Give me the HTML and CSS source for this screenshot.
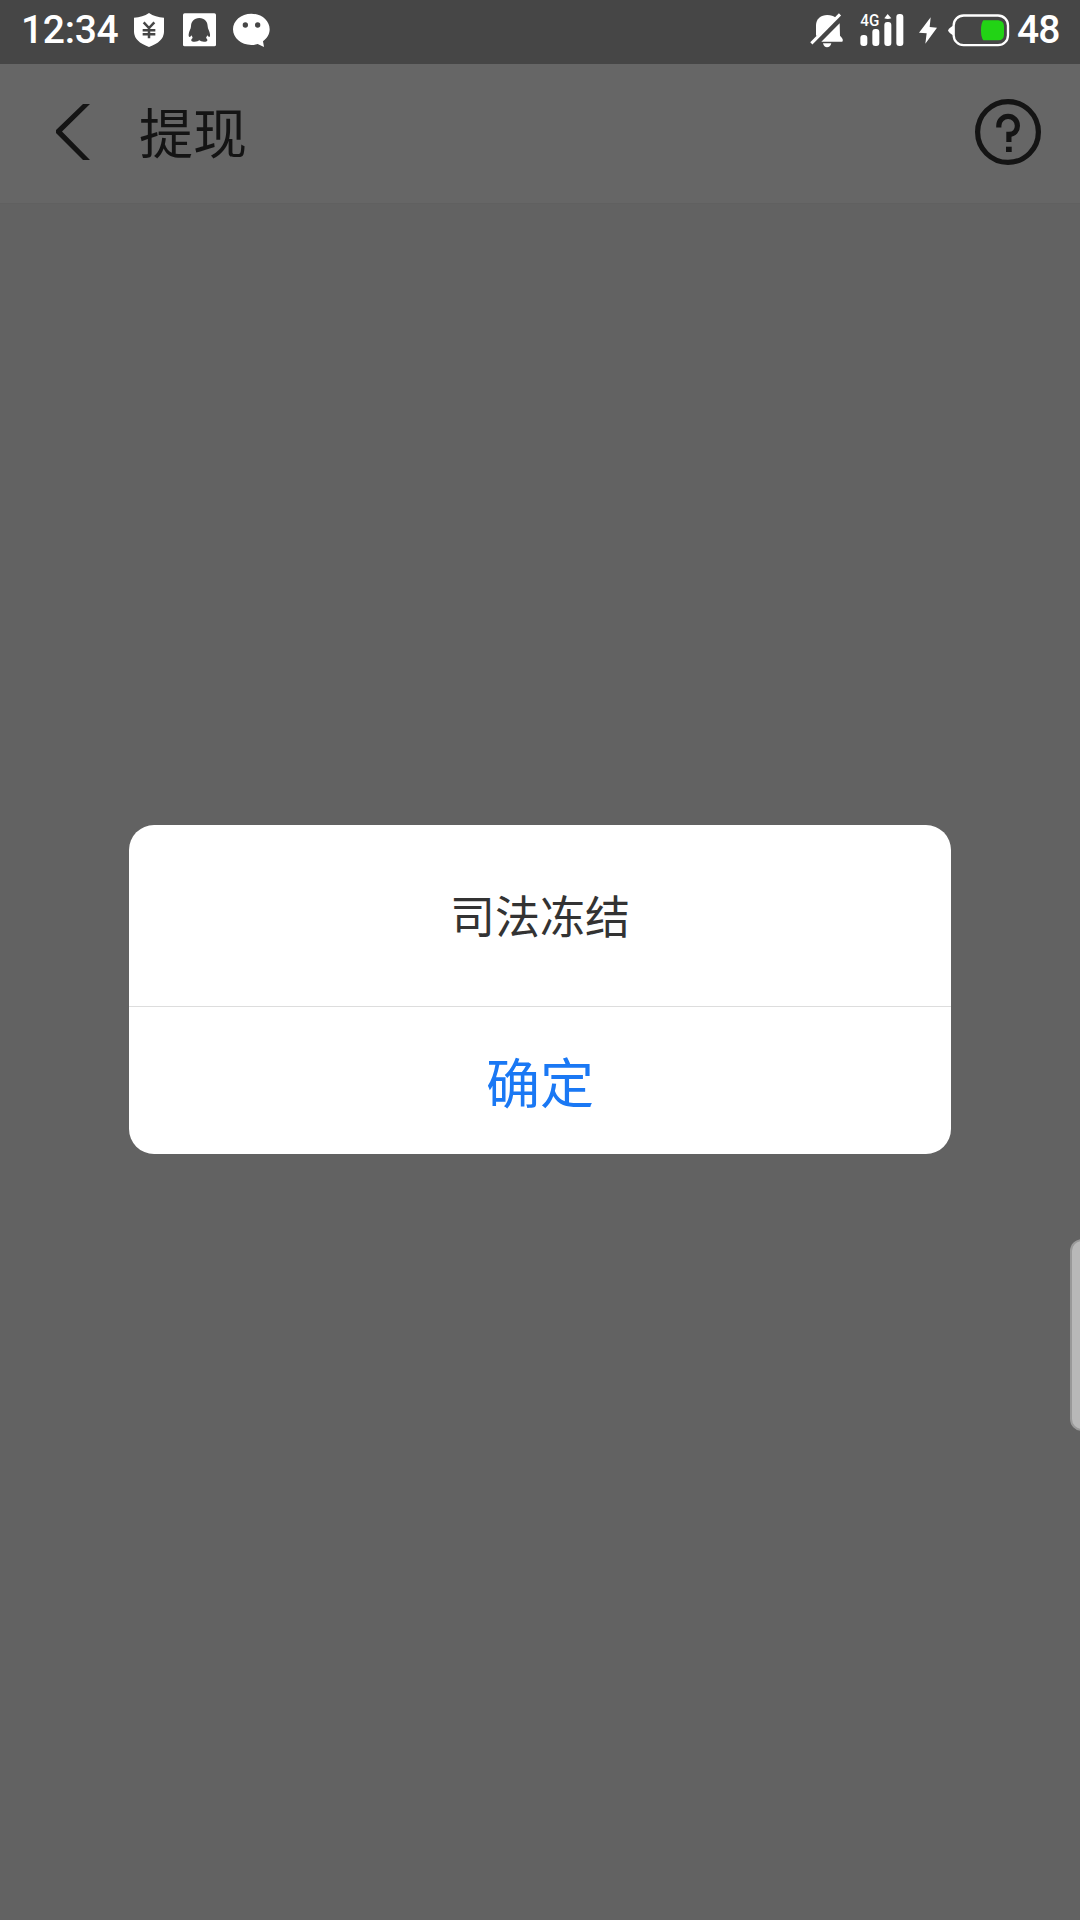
FILE: index.html
```html
<!DOCTYPE html>
<html lang="zh-CN">
<head>
<meta charset="utf-8">
<title>提现</title>
<link rel="stylesheet" href="styles.css">
</head>
<body>
<div class="screen">
  <div class="status">
    <div class="status-group">
      <span class="time">12:34</span>
      <svg class="icon-shield" width="30" height="34" viewBox="402 39 90 102"><path fill="#fff" d="M447 39Q466 52 492 53V96Q491 125 447 141Q403 125 402 96V53Q428 52 447 39Z"/><path fill="none" stroke="#464646" stroke-width="7.500" d="M431 67L447 84L463 67M447 82V115M428 91H466M428 103H466"/></svg>
      <svg class="icon-qq" width="33" height="34" viewBox="549 39 99 102"><rect x="549" y="40" width="99" height="99" rx="5" fill="#fff"/><path fill="#464646" d="M598 54C582 54 573 65 573 79C573 87 567 93 566 103C565 113 570 113 575 106L578 114C572 118 572 125 580 125Q593 126 598 121Q603 126 616 125C624 125 624 118 618 114L622 106C627 113 631 113 630 103C629 93 623 87 623 79C623 65 614 54 598 54Z"/></svg>
      <svg class="icon-chat" width="37" height="35" viewBox="699 39 111 105"><path fill="#fff" d="M754 41C785 41 809 62 809 88C809 103 801 115 789 124L792 141L773 132Q763 135 754 135C723 135 699 114 699 88C699 62 723 41 754 41Z"/><circle cx="736" cy="75" r="8" fill="#464646"/><circle cx="773" cy="75" r="8" fill="#464646"/></svg>
    </div>
    <div class="status-group">
      <svg width="34" height="35" viewBox="60 38 102 105"><g fill="#fff"><path d="M78 105V75C78 55 93 44 112 44Q128 44 137 52L81 108Z"/><path d="M149 69L94 124H157Q161 119 156 113L150 106Z"/><path d="M99 129H124Q121 141 111 141Q102 141 99 129Z"/></g><path d="M64 129L150 42" stroke="#fff" stroke-width="9"/></svg>
      <svg class="icon-signal" width="44" height="34" viewBox="212 39 132 102"><g fill="#fff"><rect x="213" y="105" width="21" height="33" rx="9"/><rect x="249" y="87" width="21" height="51" rx="9"/><rect x="285" y="66" width="21" height="72" rx="9"/><rect x="321" y="42" width="21" height="96" rx="9"/><path d="M295 42L306 55Q295 59 285 55Z"/><text class="network" x="213" y="78" textLength="57" lengthAdjust="spacingAndGlyphs">4G</text></g></svg>
      <svg class="icon-bolt" width="18" height="27" viewBox="387 50 54 81"><path fill="#fff" d="M422 51L387 97L410 99L406 130L441 82L419 80Z"/></svg>
      <svg class="icon-battery" width="62" height="33" viewBox="477 41 186 99"><rect x="494" y="45.500" width="163" height="89" rx="30" fill="none" stroke="#fff" stroke-width="7"/><path fill="#fff" d="M492 76Q479 84 477 90Q479 97 492 105Z"/><path fill="#22d315" d="M583 60H628Q645 62 645 78V103Q645 119 628 120H583Q576 112 576 90Q576 68 583 60Z"/></svg>
      <span class="level">48</span>
    </div>
  </div>
  <header class="header">
    <svg class="back" width="34" height="58" viewBox="0 0 34 58"><path fill="#141414" d="M27 1H34L6 28.500L34 57H27L0 30V27Z"/></svg>
    <h1 class="title">提现</h1>
    <svg class="help" width="66" height="66" viewBox="0 0 66 66"><circle cx="33" cy="33" r="30.400" fill="none" stroke="#141414" stroke-width="5.200"/><path fill="none" stroke="#141414" stroke-width="5.200" d="M23.800 28.500V26.700A9.300 9.300 0 0 1 33.100 17.400A9.300 9.300 0 0 1 42.400 26.700C42.400 31.500 39.500 35.400 33.900 35.400V43"/><path fill="#141414" d="M31 47.700H36.700V53H31Z"/></svg>
  </header>
  <main class="content">
    <div class="dialog">
      <p class="message">司法冻结</p>
      <button class="confirm">确定</button>
    </div>
  </main>
  <div class="edge-handle"></div>
</div>
</body>
</html>
```
FILE: styles.css
```css
* { box-sizing: border-box; }
body {
  margin: 0;
  font-family: "Noto Sans CJK SC", sans-serif;
}
.screen {
  position: relative;
  width: 1080px;
  height: 1920px;
  display: flex;
  flex-direction: column;
  overflow: hidden;
  background: #626262;
}
svg { display: block; flex: none; overflow: visible; }
.status {
  height: 64px;
  padding: 0 20px 4px 21px;
  display: flex;
  align-items: center;
  justify-content: space-between;
  background: #464646;
  color: #fff;
}
.status-group { display: flex; align-items: center; }
.time, .level {
  font: 500 39px/60px Roboto, sans-serif;
}
.time { width: 113px; letter-spacing: -0.3px; }
.icon-qq { margin-left: 19px; }
.icon-chat { margin-left: 17px; }
.icon-signal { margin-left: 16.500px; }
.icon-bolt { margin-left: 15px; }
.icon-battery { margin: 0 7px 0 11px; }
.level { width: 43px; white-space: nowrap; letter-spacing: -0.8px; }
.network { font: 500 48px Roboto, sans-serif; }
.header {
  height: 140px;
  padding: 0 39px 4px 56px;
  display: flex;
  align-items: center;
  background: #666;
  border-bottom: 1px solid #606060;
}
.title {
  margin: 0 auto 0 49px;
  padding-bottom: 1px;
  color: #141414;
  font-size: 54px;
  font-weight: 400;
  line-height: 80px;
}
.content {
  flex: 1;
  padding-top: 621px;
}
.dialog {
  width: 822px;
  height: 329px;
  margin: 0 auto;
  display: flex;
  flex-direction: column;
  background: #fff;
  border-radius: 25px;
  overflow: hidden;
}
.message {
  height: 182px;
  margin: 0;
  border-bottom: 1px solid #ddd;
  color: #333;
  font-size: 45px;
  line-height: 179px;
  text-align: center;
}
.confirm {
  flex: 1;
  padding: 0;
  border: 0;
  background: none;
  color: #1a78f4;
  font: inherit;
  font-size: 54px;
}
.edge-handle {
  position: absolute;
  top: 1239px;
  right: -14px;
  width: 24px;
  height: 192px;
  border: 2px solid #999;
  border-radius: 14px;
  background: #b8b8b8;
}
```
